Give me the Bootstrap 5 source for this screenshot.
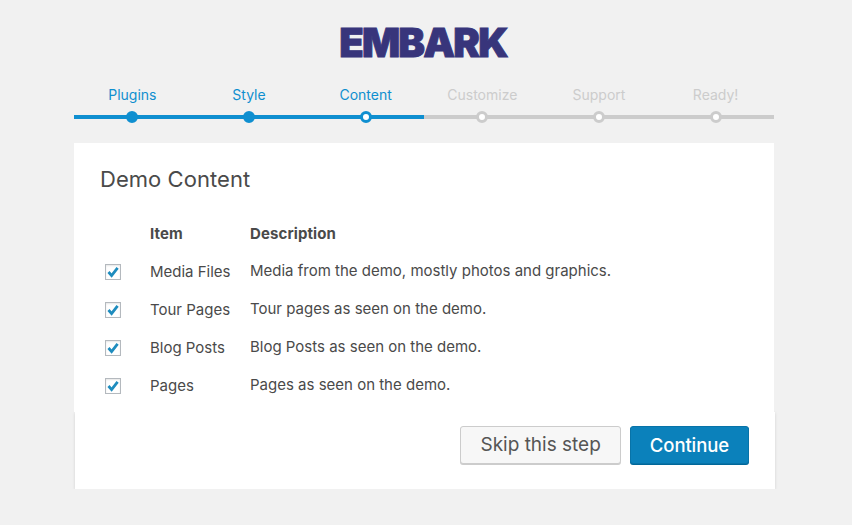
<!DOCTYPE html>
<html lang="en">
<head>
    <meta charset="UTF-8">
    <meta name="viewport" content="width=device-width, initial-scale=1.0">
    <title>Embark Setup</title>
    <link href="https://cdn.jsdelivr.net/npm/bootstrap@5.3.0/dist/css/bootstrap.min.css" rel="stylesheet">
    <style>
        body { background: #f1f1f1; font-family: Inter, "Noto Sans", sans-serif; color: #4a4a4a; font-size: 15px; }
        .setup-wrap { width: 700px; margin-left: 74px; padding-top: 20px; }
        .brand-logo { font-family: Inter, sans-serif; font-weight: 900; font-size: 40px; line-height: 46px; color: #38357b; letter-spacing: -1.8px; -webkit-text-stroke: .9px #38357b; text-align: center; height: 46px; margin-right: 2px; }
        .step-list { list-style: none; margin: 20px 0 0; padding: 0; }
        .step-item { width: 16.6667%; text-align: center; color: #ccc; font-size: 14px; line-height: 17px; }
        .step-item.is-done { color: #0f8fcf; }
        .step-track { height: 4px; background: #ccc; margin-top: 12px; position: relative; }
        .is-done .step-track { background: #0f8fd0; }
        .step-dot { position: absolute; left: 50%; top: 50%; width: 12px; height: 12px; margin: -6px 0 0 -6px; border-radius: 50%; background: #fff; border: 3.5px solid #ccc; }
        .is-done .step-dot { background: #0f8fd0; border-color: #0f8fd0; }
        .is-done .step-dot.is-current { background: #fff; }
        .setup-card { margin-top: 24px; }
        .setup-main { background: #fff; padding: 21px 26px 0; height: 269px; position: relative; z-index: 1; }
        .setup-main h1 { font-size: 22px; font-weight: 400; line-height: 30px; color: #4a4a4a; margin: 0 0 28px; letter-spacing: .05px; }
        .setup-row { display: flex; align-items: center; height: 38px; }
        .setup-row.head { height: 24px; font-weight: 700; margin-bottom: 5px; letter-spacing: .1px; }
        .cell-check { width: 50px; padding-left: 5px; padding-top: 3px; }
        .cell-item { width: 100px; padding-top: 4px; }
        .head .cell-item { padding-top: 0; }
        .cell-desc { flex: 1; padding-top: 2px; }
        .head .cell-desc { padding-top: 0; }
        .tick-box { display: block; width: 16px; height: 16px; border: 1px solid #b4b9be; background: #fff; box-shadow: inset 0 1px 2px rgba(0,0,0,.1); }
        .tick-box svg { display: block; }
        .setup-foot { background: #fff; margin: 0 -1px 0 1px; height: 77px; padding: 14px 26px 0 0; gap: 9px; box-shadow: 0 1px 3px rgba(0,0,0,.13); }
        .foot-btn { font-size: 19px; line-height: 24px; height: 38px; padding: 6px 19px; border-radius: 3px; }
        .btn-skip { background: #f7f7f7; border: 1px solid #ccc; color: #555; box-shadow: 0 1px 0 #ccc; }
        .btn-go { background: #0b81bb; border: 1px solid #0873a8; color: #fff; font-size: 18.5px; font-weight: 500; letter-spacing: -.1px; box-shadow: 0 1px 0 #006799; }
    </style>
</head>
<body>
    <div class="setup-wrap">
        <div class="brand-logo">EMBARK</div>
        <ol class="step-list d-flex">
            <li class="step-item is-done">Plugins<div class="step-track"><span class="step-dot"></span></div></li>
            <li class="step-item is-done">Style<div class="step-track"><span class="step-dot"></span></div></li>
            <li class="step-item is-done">Content<div class="step-track"><span class="step-dot is-current"></span></div></li>
            <li class="step-item">Customize<div class="step-track"><span class="step-dot"></span></div></li>
            <li class="step-item">Support<div class="step-track"><span class="step-dot"></span></div></li>
            <li class="step-item">Ready!<div class="step-track"><span class="step-dot"></span></div></li>
        </ol>
        <div class="setup-card">
            <div class="setup-main">
                <h1>Demo Content</h1>
                <div class="setup-row head">
                    <div class="cell-check"></div>
                    <div class="cell-item">Item</div>
                    <div class="cell-desc">Description</div>
                </div>
                <div class="setup-row">
                    <div class="cell-check"><span class="tick-box"><svg width="14" height="14" viewBox="0 0 14 14"><path d="M2.5 7 L5.6 10.6 L11.6 2.8" fill="none" stroke="#1e8cbe" stroke-width="2.8"/></svg></span></div>
                    <div class="cell-item">Media Files</div>
                    <div class="cell-desc">Media from the demo, mostly photos and graphics.</div>
                </div>
                <div class="setup-row">
                    <div class="cell-check"><span class="tick-box"><svg width="14" height="14" viewBox="0 0 14 14"><path d="M2.5 7 L5.6 10.6 L11.6 2.8" fill="none" stroke="#1e8cbe" stroke-width="2.8"/></svg></span></div>
                    <div class="cell-item">Tour Pages</div>
                    <div class="cell-desc">Tour pages as seen on the demo.</div>
                </div>
                <div class="setup-row">
                    <div class="cell-check"><span class="tick-box"><svg width="14" height="14" viewBox="0 0 14 14"><path d="M2.5 7 L5.6 10.6 L11.6 2.8" fill="none" stroke="#1e8cbe" stroke-width="2.8"/></svg></span></div>
                    <div class="cell-item">Blog Posts</div>
                    <div class="cell-desc">Blog Posts as seen on the demo.</div>
                </div>
                <div class="setup-row">
                    <div class="cell-check"><span class="tick-box"><svg width="14" height="14" viewBox="0 0 14 14"><path d="M2.5 7 L5.6 10.6 L11.6 2.8" fill="none" stroke="#1e8cbe" stroke-width="2.8"/></svg></span></div>
                    <div class="cell-item">Pages</div>
                    <div class="cell-desc">Pages as seen on the demo.</div>
                </div>
            </div>
            <div class="setup-foot d-flex justify-content-end">
                <a class="btn foot-btn btn-skip" href="#">Skip this step</a>
                <a class="btn foot-btn btn-go" href="#">Continue</a>
            </div>
        </div>
    </div>
    <script src="https://cdn.jsdelivr.net/npm/bootstrap@5.3.0/dist/js/bootstrap.bundle.min.js"></script>
</body>
</html>
